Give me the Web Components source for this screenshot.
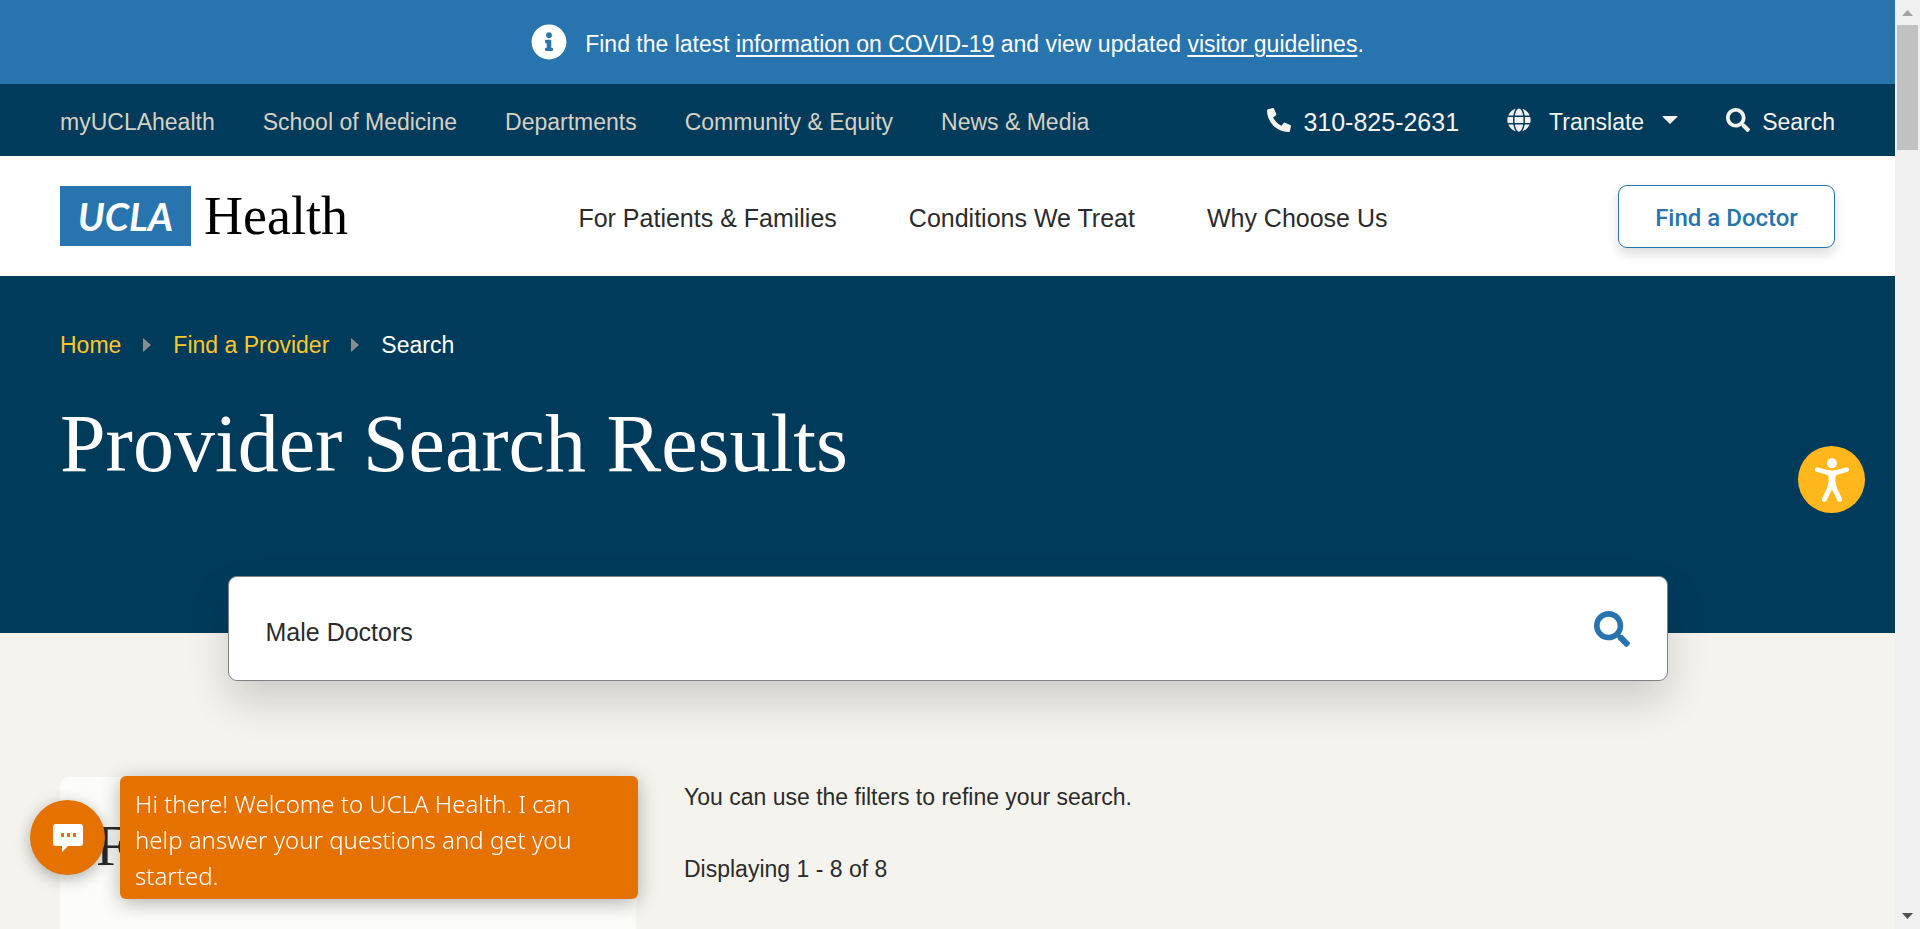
<!DOCTYPE html>
<html lang="en">
<head>
<meta charset="utf-8">
<title>Provider Search Results | UCLA Health</title>
<style>
  html, body { margin: 0; height: 100%; }
  body {
    --navy: #003b5c; --blue: #2774ae; --sand: #f5f3ee; --ink: #2b2b2b; --gold: #ffc72c; --gutter: 60px;
    display: grid; grid-template-columns: minmax(0, 1fr) 25px;
    overflow: hidden; background: var(--sand); color: var(--ink);
    font-family: "Liberation Sans", Arial, sans-serif; font-size: 23px; line-height: 36px;
  }
</style>
</head>
<body>
<uh-page>
  <uh-alert slot="top"></uh-alert>
  <uh-utility-bar slot="top"></uh-utility-bar>
  <uh-header slot="top"></uh-header>
  <uh-hero heading="Provider Search Results"></uh-hero>
  <uh-search-box value="Male Doctors"></uh-search-box>
  <uh-results>
    <h2 slot="filters">F</h2>
    <p>You can use the filters to refine your search.</p>
    <p>Displaying 1 - 8 of 8</p>
  </uh-results>
</uh-page>
<uh-scrollbar></uh-scrollbar>
<uh-accessibility></uh-accessibility>
<uh-chat>Hi there! Welcome to UCLA Health. I can help answer your questions and get you started.</uh-chat>

<script>
const define = (name, render) => customElements.define(name, class extends HTMLElement {
  connectedCallback() {
    if (!this.shadowRoot) this.attachShadow({ mode: 'open' }).innerHTML = render(this);
  }
});

const ICONS = {
  info: ['0 0 512 512', '<path d="M256 8C119.043 8 8 119.083 8 256c0 136.997 111.043 248 248 248s248-111.003 248-248C504 119.083 392.957 8 256 8zm0 110c23.196 0 42 18.804 42 42s-18.804 42-42 42-42-18.804-42-42 18.804-42 42-42zm56 254c0 6.627-5.373 12-12 12h-88c-6.627 0-12-5.373-12-12v-24c0-6.627 5.373-12 12-12h12v-64h-12c-6.627 0-12-5.373-12-12v-24c0-6.627 5.373-12 12-12h64c6.627 0 12 5.373 12 12v100h12c6.627 0 12 5.373 12 12v24z"/>'],
  phone: ['0 0 512 512', '<path transform="matrix(-1 0 0 1 512 0)" d="M493.4 24.6l-104-24c-11.3-2.6-22.9 3.3-27.5 13.9l-48 112c-4.2 9.8-1.4 21.3 6.9 28l60.6 49.6c-36 76.7-98.9 140.5-177.2 177.2l-49.6-60.6c-6.8-8.3-18.2-11.1-28-6.9l-112 48C3.9 366.5-2 378.1.6 389.4l24 104C27.1 504.2 36.7 512 48 512c256.1 0 464-207.5 464-464 0-11.2-7.7-20.9-18.6-23.4z"/>'],
  globe: ['0 0 496 512', '<path d="M336.5 160C322 70.7 287.8 8 248 8s-74 62.7-88.5 152h177zM152 256c0 22.2 1.2 43.5 3.3 64h185.3c2.1-20.5 3.3-41.8 3.3-64s-1.2-43.5-3.3-64H155.3c-2.1 20.5-3.3 41.8-3.3 64zm324.7-96c-28.6-67.9-86.5-120.4-158-141.6 24.4 33.8 41.2 84.7 50 141.6h108zM177.2 18.4C105.8 39.6 47.8 92.1 19.3 160h108c8.7-56.9 25.5-107.8 49.9-141.6zM487.4 192H372.7c2.1 21 3.3 42.5 3.3 64s-1.2 43-3.3 64h114.6c5.5-20.5 8.6-41.8 8.6-64s-3.1-43.5-8.5-64zM120 256c0-21.5 1.2-43 3.3-64H8.6C3.2 212.5 0 233.8 0 256s3.2 43.5 8.6 64h114.6c-2-21-3.2-42.5-3.2-64zm39.5 96c14.5 89.3 48.7 152 88.5 152s74-62.7 88.5-152h-177zm159.3 141.6c71.4-21.2 129.4-73.7 158-141.6h-108c-8.8 56.9-25.6 107.8-50 141.6zM19.3 352c28.6 67.9 86.5 120.4 158 141.6-24.4-33.8-41.2-84.7-50-141.6h-108z"/>'],
  search: ['0 0 512 512', '<path d="M505 442.7L405.3 343c-4.5-4.5-10.6-7-17-7H372c27.6-35.3 44-79.7 44-128C416 93.1 322.9 0 208 0S0 93.1 0 208s93.1 208 208 208c48.3 0 92.7-16.4 128-44v16.3c0 6.4 2.5 12.5 7 17l99.7 99.7c9.4 9.4 24.6 9.4 33.9 0l28.3-28.3c9.4-9.4 9.4-24.6.1-34zM208 336c-70.7 0-128-57.2-128-128 0-70.7 57.2-128 128-128 70.7 0 128 57.2 128 128 0 70.7-57.2 128-128 128z"/>'],
  down: ['0 0 16 8', '<path d="M1 0h14q1 0 .4.8L8.6 7.6q-.6.6-1.200 0L.6.8Q0 0 1 0z"/>'],
  right: ['0 0 8 14', '<path d="M0 0L8 7L0 14z"/>'],
  person: ['0 0 34 44', '<circle cx="17" cy="5.200" r="5"/><path d="M2.600 9.600C1.200 9.200 0 10.200 0 11.700c0 1 .6 1.700 1.600 2L11 16.500c2 .6 2.600 1.400 2.600 3.200 0 5-.6 8-2 11.300L7.200 40.200c-.6 1.400-.2 2.800 1 3.400 1.300.6 2.700.1 3.400-1.200L17 31.600l5.400 10.800c.7 1.300 2.100 1.800 3.400 1.200 1.200-.6 1.600-2 1-3.400L22.400 31c-1.400-3.300-2-6.300-2-11.300 0-1.800.6-2.600 2.600-3.200l9.400-2.800c1-.3 1.600-1 1.600-2 0-1.500-1.200-2.500-2.600-2.100L22 11.800c-3.400.9-6.600.9-10 0z"/>'],
  chat: ['0 0 30 28', '<path fill-rule="evenodd" d="M3 0h24q3 0 3 3v16q0 3-3 3H15l-6 6v-6H3q-3 0-3-3V3q0-3 3-3zM8 9v4h3V9zm6 0v4h3V9zm6 0v4h3V9z"/>'],
  tick: ['0 0 11 6', '<path d="M0 6L5.500 0L11 6z"/>']
};

define('uh-icon', el => {
  const [box, art] = ICONS[el.getAttribute('name')];
  return `<style>
    :host { display: block; flex: none; width: var(--w, 24px); height: var(--h, var(--w, 24px)); }
    svg { display: block; width: 100%; height: 100%; fill: currentColor; }
  </style><svg viewBox="${box}" aria-hidden="true">${art}</svg>`;
});

define('uh-page', () => `<style>
    :host { display: block; min-width: 0; overflow: hidden; }
  </style><header><slot name="top"></slot></header><main><slot></slot></main>`);

define('uh-alert', () => `<style>
    :host { display: flex; justify-content: center; align-items: center; gap: 18px; height: 84px;
      background: var(--blue); color: #fff; }
    uh-icon { --w: 36px; }
    p { margin: 0; padding-top: 4px; }
    a { color: inherit; text-underline-offset: 3px; text-decoration-thickness: 2px; }
  </style>
  <uh-icon name="info"></uh-icon>
  <p>Find the latest <a href="#covid">information on COVID-19</a> and view updated <a href="#visit">visitor guidelines</a>.</p>`);

define('uh-utility-bar', () => `<style>
    :host { display: flex; justify-content: space-between; align-items: center; height: 72px;
      padding: 0 var(--gutter); background: var(--navy); color: #f5f3ee; }
    nav, div { display: flex; align-items: center; gap: 48px; }
    nav { color: #d6d1c4; }
    a, button { display: flex; align-items: center; color: inherit; text-decoration: none; }
    nav a, span { padding-top: 4px; }
    button { font: inherit; border: 0; padding: 0; background: none; }
    .phone { gap: 12px; font-size: 25px; }
    .lang { gap: 18px; }
    .find { gap: 12px; }
    .caret { --w: 16px; --h: 8px; }
  </style>
  <nav aria-label="Organization">
    <a href="#my">myUCLAhealth</a><a href="#school">School of Medicine</a><a href="#dept">Departments</a>
    <a href="#community">Community &amp; Equity</a><a href="#news">News &amp; Media</a>
  </nav>
  <div>
    <a class="phone" href="tel:3108252631"><uh-icon name="phone"></uh-icon><span>310-825-2631</span></a>
    <button class="lang"><uh-icon name="globe"></uh-icon><span>Translate</span><uh-icon class="caret" name="down"></uh-icon></button>
    <button class="find"><uh-icon name="search"></uh-icon><span>Search</span></button>
  </div>`);

define('uh-logo', () => `<style>
    :host { display: block; }
    a { display: flex; align-items: center; gap: 13px; color: #000; text-decoration: none; }
    .mark { display: grid; place-items: center; width: 131px; height: 60px; background: var(--blue);
      color: #fff; font: italic 700 39px/60px Lato, sans-serif; }
    .name { font: 54px/60px "Liberation Serif", serif; }
  </style><a href="#home"><span class="mark">UCLA</span><span class="name">Health</span></a>`);

define('uh-header', () => `<style>
    :host { display: flex; justify-content: space-between; align-items: center; height: 120px;
      padding: 0 var(--gutter); background: #fff; }
    nav { display: flex; gap: 72px; font-size: 25px; padding-top: 4px; }
    nav a { color: inherit; text-decoration: none; }
    button { width: 217px; height: 63px; box-sizing: border-box; border: 1px solid var(--blue);
      border-radius: 9px; background: #fff; color: var(--blue); font: 500 24px/36px Roboto, sans-serif;
      padding: 4px 0 0; box-shadow: 0 6px 12px rgba(0, 0, 0, .14); }
  </style>
  <uh-logo></uh-logo>
  <nav aria-label="Main"><a href="#patients">For Patients &amp; Families</a><a href="#conditions">Conditions We Treat</a><a href="#why">Why Choose Us</a></nav>
  <button>Find a Doctor</button>`);

define('uh-hero', el => `<style>
    :host { display: block; box-sizing: border-box; height: 357px; padding: 51px var(--gutter) 0;
      background: var(--navy); color: #fff; }
    nav { display: flex; align-items: center; gap: 22px; }
    nav uh-icon { --w: 8px; --h: 14px; color: #898d8f; }
    a { color: var(--gold); text-decoration: none; }
    h1 { margin: 36px 0 0; font: 400 82px/90px "Liberation Serif", serif; }
  </style>
  <nav aria-label="Breadcrumb"><a href="#home">Home</a><uh-icon name="right"></uh-icon><a href="#providers">Find a Provider</a><uh-icon name="right"></uh-icon><span>Search</span></nav>
  <h1>${el.getAttribute('heading')}</h1>`);

define('uh-search-box', el => `<style>
    :host { display: block; max-width: 1440px; margin: -57px auto 0; position: relative; }
    form { display: flex; align-items: center; box-sizing: border-box; height: 105px; padding: 0 37px;
      background: #fff; border: 1px solid #808285; border-radius: 9px; box-shadow: 0 20px 40px rgba(0, 0, 0, .16); }
    input { flex: 1; min-width: 0; border: 0; padding: 6px 0 0; outline: 0; background: none;
      color: var(--ink); font: inherit; font-size: 25px; line-height: 36px; }
    button { border: 0; padding: 0; background: none; color: var(--blue); }
    uh-icon { --w: 36px; }
  </style>
  <form><input type="text" aria-label="Search providers" value="${el.getAttribute('value')}">
  <button type="button" aria-label="Search"><uh-icon name="search"></uh-icon></button></form>`);

define('uh-results', () => `<style>
    :host { display: grid; grid-template-columns: minmax(0, 576px) minmax(0, 1fr); gap: 48px;
      padding: 96px var(--gutter) 0; }
    aside { box-sizing: border-box; min-height: 480px; padding: 36px; background: #fcfdf9; border-radius: 9px; }
    ::slotted(h2) { margin: 0; font: 400 56px/66px "Liberation Serif", serif; }
    ::slotted(p) { margin: 2px 0 36px; }
  </style><aside><slot name="filters"></slot></aside><section><slot></slot></section>`);

define('uh-scrollbar', () => `<style>
    :host { display: flex; flex-direction: column; align-items: center; justify-content: space-between;
      box-sizing: border-box; height: 100vh; padding: 10px 0; background: #f0f0f0; }
    uh-icon { --w: 11px; --h: 6px; color: #a3a3a3; }
    uh-icon:last-child { transform: rotate(180deg); color: #505050; }
    div { width: 21px; height: 125px; margin: 9px 0 auto; background: #c1c1c1; }
  </style><uh-icon name="tick"></uh-icon><div></div><uh-icon name="tick"></uh-icon>`);

define('uh-accessibility', () => `<style>
    :host { position: fixed; right: 55px; top: 446px; z-index: 3; }
    button { display: grid; place-items: center; width: 67px; height: 67px; padding: 0; border: 0;
      border-radius: 50%; background: #ffb71b; color: #fff; }
    uh-icon { --w: 34px; --h: 44px; }
  </style><button aria-label="Accessibility options"><uh-icon name="person"></uh-icon></button>`);

define('uh-chat', () => `<style>
    :host { position: fixed; left: 30px; bottom: 30px; z-index: 3; display: flex; align-items: center; gap: 15px; color: #fff; }
    button { display: grid; place-items: center; width: 75px; height: 75px; padding: 0; border: 0;
      border-radius: 50%; background: #e57200; color: #fff; box-shadow: 0 4px 16px rgba(0, 0, 0, .3); }
    uh-icon { --w: 30px; --h: 28px; }
    p { box-sizing: border-box; width: 518px; margin: 0; padding: 10px 15px 5px; background: #e57200; border-radius: 6px;
      font: 300 24px/36px "Noto Sans", sans-serif; box-shadow: 0 4px 20px rgba(0, 0, 0, .3); }
  </style><button aria-label="Open chat"><uh-icon name="chat"></uh-icon></button><p><slot></slot></p>`);
</script>
</body>
</html>
